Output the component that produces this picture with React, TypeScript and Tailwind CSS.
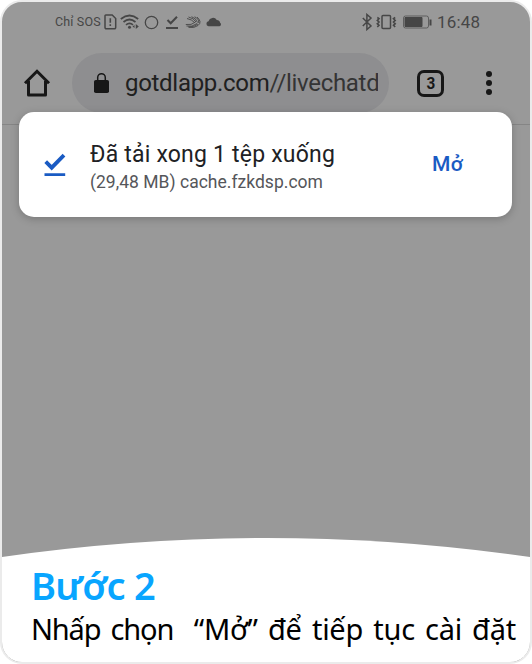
import React from "react";

function StatusBar() {
  return (
    <div className="flex h-10 items-center text-[#464646]">
      <span className="ml-[53px] w-[47px] whitespace-nowrap text-[12.500px] tracking-[0.150px]">Chỉ SOS</span>
      <svg className="ml-[2px] h-4 w-[13px]" viewBox="0 0 13 16" fill="none" stroke="currentColor" strokeWidth="1.500">
        <path d="M1.8 1h6.4l3.5 3.5v9a1.2 1.2 0 0 1-1.2 1.2H2.2A1.2 1.2 0 0 1 1 13.500V1.8A.8.8 0 0 1 1.800 1Z" />
        <path d="M6.300 4.200v4.500M6.300 10.300v1.700" strokeWidth="1.600" />
      </svg>
      <svg className="ml-[3px] h-4 w-[20px]" viewBox="0 0 20 16" fill="none" stroke="currentColor" strokeWidth="1.700">
        <path d="M.8 5Q9.500-2 18.200 5M3.500 8Q9.500 3 15.500 8M6 10.800Q9.500 8 13 10.800" />
        <circle cx="9.500" cy="13.300" r="1.500" fill="currentColor" stroke="none" />
        <path d="M15.800 10v5l3-2.500ZM14.500 11v3l-2-1.500Z" fill="currentColor" stroke="none" />
      </svg>
      <svg className="ml-[4px] h-4 w-[15px]" viewBox="0 0 15 16" fill="none" stroke="currentColor" strokeWidth="1.300">
        <circle cx="7.500" cy="8.500" r="6.200" />
      </svg>
      <svg className="ml-[6px] h-4 w-[14px]" viewBox="0 0 14 16" fill="none" stroke="currentColor" strokeWidth="2">
        <path d="m2.500 6 3.200 3.300L12 2.800M1 14h12" />
      </svg>
      <svg className="ml-[6px] h-4 w-[16px]" viewBox="0 0 16 16" fill="none" stroke="currentColor" strokeWidth="0.900">
        <path d="M3.500 3Q8.500 4 11 8M6.500 2.700Q11 4 12.500 8.500M9.500 2.800Q14 4.500 13.800 9M12 3Q17.500 8 13 11.500Q9 14.500 4 13.300M1.500 12Q7 13.500 12 9.500M.8 10.500Q6.500 11.500 10.500 8M2 4.500Q7 5.500 9.500 8.500M3 13Q9 13.500 13 10" />
      </svg>
      <svg className="ml-[4px] h-4 w-[17px]" viewBox="0 0 17 16" fill="currentColor">
        <path d="M3.500 12.300a2.600 2.600 0 0 1 0-5.100A4.600 4.600 0 0 1 11.800 6a3.400 3.400 0 0 1 3.300 2.700 2 2 0 0 1-.6 3.600Z" />
      </svg>
      <svg className="ml-[139px] h-[18px] w-[12px]" viewBox="0 0 12 18" fill="none" stroke="currentColor" strokeWidth="1.500">
        <path d="m1.800 5 8.200 8-4.100 3.500V1.500L10 5l-8.200 8" />
      </svg>
      <svg className="ml-[3px] h-4 w-[21px]" viewBox="0 0 21 16" fill="none" stroke="currentColor" strokeWidth="1.500">
        <rect x="6" y="1.500" width="8.500" height="13" rx="1" />
        <path d="m1.300 3.500 1.700 1.200-1.700 1.700L3 8 1.300 9.700 3 11.300 1.300 13M19.200 3.500 17.500 4.700l1.700 1.700L17.500 8l1.700 1.700-1.700 1.600 1.700 1.700" strokeWidth="1.600" />
      </svg>
      <svg className="ml-[5px] h-4 w-[30px]" viewBox="0 0 30 16" fill="none" stroke="currentColor">
        <rect x="1.500" y="2" width="25" height="12" rx="2" opacity=".7" />
        <path d="M3 3.500h17v9H3Z" fill="currentColor" />
        <path d="M28.500 5.500v6" strokeWidth="2" />
      </svg>
      <span className="ml-[5px] text-[17px] leading-5 tracking-[0.200px]">16:48</span>
    </div>
  );
}

function BrowserBar() {
  return (
    <div className="flex h-[83px] items-center border-b border-[#858585] text-[#171717]">
      <svg className="ml-[21px] h-[30px] w-[28px]" viewBox="0 0 28 30" fill="none" stroke="currentColor" strokeWidth="3" strokeLinejoin="round">
        <path d="M2 15.200 14 3.300l12 11.900" strokeLinejoin="miter" />
        <path d="M5.500 13v14h17V13" />
      </svg>
      <div className="ml-[21px] flex h-[60px] w-[317px] items-center rounded-full bg-[#8e8e90]">
        <svg className="ml-[21px] h-[22px] w-[17px]" viewBox="0 0 17 22">
          <rect x="1" y="8" width="15" height="13" rx="1.800" fill="currentColor" />
          <path d="M4.700 9V5.500a3.800 3.800 0 0 1 7.600 0V9" fill="none" stroke="currentColor" strokeWidth="1.500" />
        </svg>
        <div className="ml-[15px] w-[253px] overflow-hidden whitespace-nowrap text-[24px] leading-8 -tracking-[0.300px]">
          <span className="text-[#202020]">gotdlapp.com</span>
          <span className="text-[#343434]">//livechatd</span>
        </div>
      </div>
      <div className="ml-[28px] flex h-[27px] w-[27px] items-center justify-center rounded-[7px] border-[3px] border-[#171717] text-[17px] font-bold leading-none">
        <span className="scale-x-90">3</span>
      </div>
      <div className="ml-[42px] flex flex-col gap-[3px]">
        <i className="size-[6px] rounded-full bg-[#171717]" />
        <i className="size-[6px] rounded-full bg-[#171717]" />
        <i className="size-[6px] rounded-full bg-[#171717]" />
      </div>
    </div>
  );
}

function DownloadNotice() {
  return (
    <section className="relative -mt-[13px] ml-[17px] flex h-[105.400px] w-[493.400px] rounded-[15px] bg-white shadow-[0_2px_8px_rgba(0,0,0,0.22)]">
      <svg className="ml-[25px] mt-[39px] h-[26px] w-[22px]" viewBox="0 0 22 26" fill="none" stroke="#1a5bc3">
        <path d="m1.700 10.700 6 6L20 4.200" strokeWidth="3.800" />
        <path d="M.5 23.700h20.700" strokeWidth="2.800" />
      </svg>
      <div className="ml-[24px] mt-[29px] w-[343px] whitespace-nowrap">
        <h1 className="text-[23px] leading-[28px] tracking-[0.200px] text-[#202124]">Đã tải xong 1 tệp xuống</h1>
        <p className="text-[17.500px] leading-[26px] tracking-[0.020px] text-[#55565a]">(29,48 MB) cache.fzkdsp.com</p>
      </div>
      <button className="-ml-px mt-[38px] h-[28px] text-[21px] font-medium leading-[28px] tracking-[0.300px] text-[#1a5bc3]">Mở</button>
    </section>
  );
}

export default function App() {
  return (
    <main className="flex h-[664px] w-[532px] flex-col overflow-hidden rounded-[22px] border-2 border-[#ebebeb] bg-[#999999] font-[Roboto,sans-serif]">
      <StatusBar />
      <BrowserBar />
      <DownloadNotice />
      <footer className="mt-auto">
        <svg className="block h-[19px] w-full" viewBox="0 0 528 19" preserveAspectRatio="none">
          <path d="M0 19Q264-19 528 19V20H0Z" fill="white" />
        </svg>
        <div className="h-[105px] whitespace-nowrap bg-white pl-[29px] pt-[4px] font-['Noto_Sans',sans-serif]">
          <h2 className="text-[38px] font-semibold leading-[48px] -tracking-[0.700px] text-[#08a5ff]">Bước 2</h2>
          <p className="mt-px whitespace-pre text-[29px] leading-[38px] text-black">
            <span className="-tracking-[1.200px] [word-spacing:4px]">{"Nhấp chọn  "}</span>
            <span className="-tracking-[0.250px] [word-spacing:2.900px]">“Mở” để tiếp tục cài đặt</span>
          </p>
        </div>
      </footer>
    </main>
  );
}
